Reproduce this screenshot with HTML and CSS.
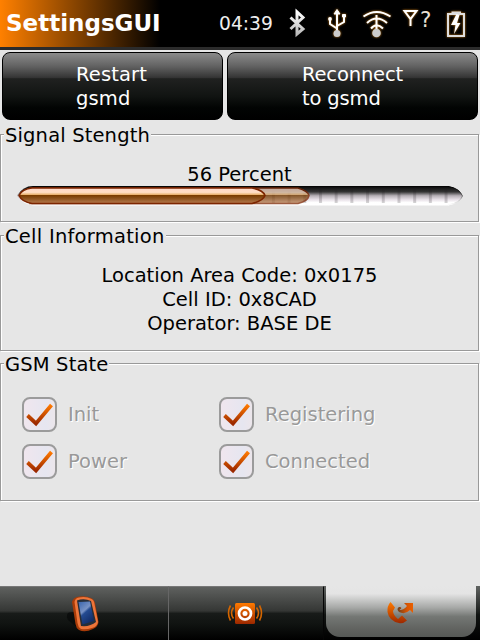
FILE: index.html
```html
<!DOCTYPE html>
<html lang="en">
<head>
<meta charset="utf-8">
<title>SettingsGUI</title>
<link rel="stylesheet" href="styles.css">
</head>
<body>
<svg class="defs" width="0" height="0" aria-hidden="true">
  <defs>
    <linearGradient id="tick" x1="0" y1="0" x2="0" y2="1"><stop offset="0" stop-color="#ff7a00"/><stop offset="1" stop-color="#9c2800"/></linearGradient>
    <linearGradient id="silver" x1="0" y1="0" x2="0" y2="1"><stop offset="0" stop-color="#fff"/><stop offset="1" stop-color="#bbb"/></linearGradient>
    <symbol id="check" viewBox="0 0 35 35">
      <path d="M5.500 18.500 14 26.500 29.500 8" fill="none" stroke="url(#tick)" stroke-width="3.8"/>
    </symbol>
  </defs>
</svg>
<header class="topbar">
  <h1>SettingsGUI</h1>
  <time>04:39</time>
  <svg class="status" width="198" height="47" viewBox="282 0 198 47">
    <path d="M290.5 17.5 303 29 297 34V12L303 17.500 290.5 29" fill="none" stroke="url(#silver)" stroke-width="3"/>
    <g class="glow" fill="none" stroke="#fff" stroke-width="2">
      <path d="M337 33V12M337 28.500 330 24V20M337 26 344 22V17"/>
      <path d="M334 14 337 9.500 340 14ZM342.500 14.500H345.500V17H342.500Z" fill="#fff" stroke-width="1"/>
      <circle cx="330" cy="19" r="1.900" fill="#fff" stroke="none"/>
      <circle cx="337" cy="33.500" r="3.500" fill="#ccc" stroke="none"/>
      <path d="M363.500 16.500Q376.500 7.500 390.500 16.500M367 23Q376.500 14 387 23M371 28.500Q376.500 22 383 28.500M376.500 33V15"/>
      <circle cx="376.500" cy="33" r="4.300" fill="#ccc" stroke="none"/>
      <path d="M404.500 11H416.500L410.500 19ZM410.500 18V26"/>
      <path d="M448 14H464V36H448ZM451.500 12.500H461" stroke="#ddd"/>
      <path d="M456.500 14 451 25H455.500L454 34 460.500 23H457L459.500 15Z" fill="#fff" stroke="none"/>
    </g>
    <text class="question" x="420" y="27">?</text>
  </svg>
</header>
<main>
  <div class="actions">
    <button class="restart"><span>Restart<br>gsmd</span></button>
    <button class="reconnect"><span>Reconnect<br>to gsmd</span></button>
  </div>

  <section class="frame signal">
    <h2>Signal Stength</h2>
    <p>56 Percent</p>
    <svg class="meter" width="447" height="21" viewBox="17 185 447 21">
      <defs>
        <linearGradient id="track" x1="0" y1="0" x2="0" y2="1"><stop offset="0" stop-color="#000"/><stop offset=".09" stop-color="#151515"/><stop offset=".3" stop-color="#343434"/><stop offset=".5" stop-color="#b5afb5"/><stop offset=".7" stop-color="#e8e1e8"/><stop offset=".85" stop-color="#fff"/><stop offset="1" stop-color="#fff"/></linearGradient>
        <linearGradient id="fill" x1="0" y1="0" x2="0" y2="1"><stop offset="0" stop-color="#ffd7c8"/><stop offset=".28" stop-color="#ffdfc5"/><stop offset=".43" stop-color="#e8b16e"/><stop offset=".48" stop-color="#7b3d00"/><stop offset=".65" stop-color="#89501a"/><stop offset="1" stop-color="#b87b50"/></linearGradient>
        <linearGradient id="rim" x1="0" y1="0" x2="0" y2="1"><stop offset="0" stop-color="#000"/><stop offset=".3" stop-color="#222"/><stop offset=".65" stop-color="#aaa"/><stop offset="1" stop-color="#fff"/></linearGradient>
        <pattern id="ribs" x="318" y="186" width="15.700" height="20" patternUnits="userSpaceOnUse"><path d="M1 2H4V17H1Z" fill="#201820" opacity=".2"/></pattern>
      </defs>
      <path d="M17 195.500Q23 186 33 186H448Q459 188 463 196Q460 203 448 205.500H33Q22 204 17 195.500Z" fill="url(#track)"/>
      <path d="M264 187H448V205H264Z" fill="url(#ribs)"/>
      <path d="M448 186.500Q459 188 462.500 196Q460 203 448 205" fill="none" stroke="url(#rim)"/>
      <path d="M30 188H298Q308 191 309 195.500Q308 201 298 203.500H30Z" fill="url(#fill)" stroke="#7c2500" stroke-width="1.500" opacity=".75"/>
      <path d="M32 188H252Q263 190 265 195.500Q263 201 252 203.500H32Q22 202 19 195.500Q22 189 32 188Z" fill="url(#fill)" stroke="#7c2500" stroke-width="1.600"/>
    </svg>
  </section>

  <section class="frame cell">
    <h2>Cell Information</h2>
    <p>Location Area Code: 0x0175<br>Cell ID: 0x8CAD<br>Operator: BASE DE</p>
  </section>

  <section class="frame gsm">
    <h2>GSM State</h2>
    <div class="checks">
      <div class="check"><span class="box"><svg><use href="#check"/></svg></span>Init</div>
      <div class="check"><span class="box"><svg><use href="#check"/></svg></span>Registering</div>
      <div class="check"><span class="box"><svg><use href="#check"/></svg></span>Power</div>
      <div class="check"><span class="box"><svg><use href="#check"/></svg></span>Connected</div>
    </div>
  </section>
</main>
<nav class="tabs">
  <div class="tab">
    <svg width="168" height="54" viewBox="0 586 168 54">
      <defs><linearGradient id="screen" x1="0" y1="0" x2=".6" y2="1"><stop offset="0" stop-color="#3864ad"/><stop offset=".45" stop-color="#7893c5"/><stop offset=".55" stop-color="#244b91"/><stop offset="1" stop-color="#122d68"/></linearGradient></defs>
      <path d="M74 612Q64 611 68 620L79 629Z" fill="#050606" opacity=".6"/>
      <path d="M72 602Q73 598 77 597Q84 595 91 598Q94 599 95 603L98.500 622Q98 627 93 629Q85 633 79 630Q76 628 75.500 624Z" fill="#a83b08"/>
      <path d="M74.500 602Q75 598 79 597.500Q86 596 91.500 599Q94 600 94.500 604L98 622Q97 627 92 628Q86 630 81 629Q78 627 77.500 623Z" fill="#ed753a"/>
      <path d="M77 600.500Q84 598 91 601L96 622Q90 627 81 626Z" fill="#272e38"/>
      <path d="M78.500 602 90 601.500 94 621 82.500 624.500Z" fill="url(#screen)"/>
    </svg>
  </div>
  <div class="tab second">
    <svg width="156" height="54" viewBox="169 586 156 54">
      <rect x="235" y="603" width="20" height="21" rx="1.500" fill="url(#tick)"/>
      <circle cx="245" cy="613.500" r="6" fill="none" stroke="#fff" stroke-width="2.700"/>
      <circle cx="245" cy="613.500" r="2.500" fill="#fff"/>
      <path d="M233.500 607.500Q229.500 613 233.500 618.500M230.500 605.500Q226.500 613 230.500 620.500M256.500 607.500Q260.500 613 256.500 618.500M259.500 605.500Q263.500 613 259.500 620.500" fill="none" stroke="#d56600" stroke-width="1.600"/>
    </svg>
  </div>
  <div class="tab active">
    <svg width="149" height="51" viewBox="326 586 149 51">
      <defs>
        <linearGradient id="arrow" x1="0" y1="0" x2="1" y2="0"><stop offset="0" stop-color="#70401c"/><stop offset=".65" stop-color="#dc5500"/><stop offset="1" stop-color="#e86000"/></linearGradient>
      </defs>
      <path d="M390.500 602 395 607.500 393 611Q393 615 398 619L402 615.500 407 620.500Q403 624 399 623Q389 621 387.500 612Q387 606 390.500 602Z" fill="url(#tick)"/>
      <path d="M404 603H413V613L410 610Q405 615 399 612Q396 609 399 607Q402 606.500 401 609Q399 609 400 610Q404 610 407 606Z" fill="url(#arrow)"/>
    </svg>
  </div>
</nav>
</body>
</html>
```

FILE: styles.css
```css
* { box-sizing: border-box; }
body {
  margin: 0;
  width: 480px;
  height: 640px;
  display: flex;
  flex-direction: column;
  overflow: hidden;
  background: #e6e6e6;
  color: #000;
  font: 19.5px/24px "DejaVu Sans", sans-serif;
}
h1, h2, p { margin: 0; }
svg { display: block; }
.defs { position: absolute; }
.topbar {
  flex: none;
  height: 50px;
  border-bottom: 3px solid #2b2b2b;
  display: flex;
  align-items: center;
  padding-left: 6px;
  background: linear-gradient(90deg, #ff8000 0, #000 160px);
  color: #fff;
}
.topbar h1 { width: 213px; font-size: 23px; line-height: 47px; }
.topbar time { width: 63px; font-size: 18.7px; color: #eee; }
.glow { filter: drop-shadow(0 0 1px #c47816); }
.question { font-size: 21.5px; fill: #e9e0d4; }

main { flex: 1; }
.actions { display: flex; gap: 4px; padding: 2px 2px 0; }
.actions button {
  height: 68px;
  padding: 0;
  display: flex;
  align-items: center;
  justify-content: center;
  border: 1px solid #000;
  border-radius: 8px;
  background: linear-gradient(#8b8b8b 0, #626262 20%, #353535 37%, #202120 39%, #111412 65%, #020403 83%, #000);
  color: #fff;
  font: inherit;
  text-align: left;
}
.actions span { padding-top: 1px; }
.restart { width: 221px; }
.restart span { letter-spacing: .15px; margin-right: 2px; }
.reconnect { width: 251px; }
.reconnect span { letter-spacing: -.15px; }

.frame {
  width: 479px;
  border: 1px solid #999;
  box-shadow: inset 1px 1px 0 #fff, 1px 1px 0 #fff;
}
.frame h2 {
  width: max-content;
  margin: -11px 0 0 3px;
  padding: 0 1px;
  background: #e6e6e6;
  font-size: inherit;
  font-weight: normal;
  letter-spacing: .15px;
}
.frame p { text-align: center; }
.signal { height: 88px; margin-top: 14px; }
.signal p { margin-top: 15px; }
.meter { margin: -2px 0 0 16px; }
.cell { height: 116px; margin-top: 13px; }
.cell h2 { letter-spacing: .25px; }
.cell p { margin-top: 15px; }
.gsm { height: 138px; margin-top: 12px; }
.checks {
  display: grid;
  grid-template-columns: 197px 1fr;
  row-gap: 12px;
  margin: 20px 0 0 21px;
}
.check {
  display: flex;
  align-items: center;
  gap: 11px;
  color: #999;
  text-shadow: 1px 1px 0 #fff;
}
.box {
  width: 35px;
  height: 35px;
  border: 2px solid #9b9b9b;
  border-radius: 8px;
  background: linear-gradient(90deg, #f0e6ee, #e6e6f0 70%, #ece6eb);
}
.box svg { width: 35px; height: 35px; margin: -2px; }

.tabs { flex: none; display: flex; height: 54px; background: linear-gradient(#606361, #1c1f1d 48%, #111412 53%, #000); }
.tab {
  width: 168px;
  border-top: 1px solid #777;
  background: linear-gradient(#5f615f 0, #353735 45%, #181b19 50%, #101311 70%, #000);
}
.second { width: 156px; border-left: 1px solid #666; border-right: 1px solid #050505; }
.active {
  width: 150px;
  height: 51px;
  margin-left: 2px;
  border: 0;
  border-radius: 0 0 14px 14px;
  background: linear-gradient(#e6e6e6 0, #e4e4e4 15%, #a5a7a5 43%, #747774 60%, #60625f 85%, #565956);
}
.tab svg { margin-top: -1px; }
.active svg { margin-top: 0; }
```
